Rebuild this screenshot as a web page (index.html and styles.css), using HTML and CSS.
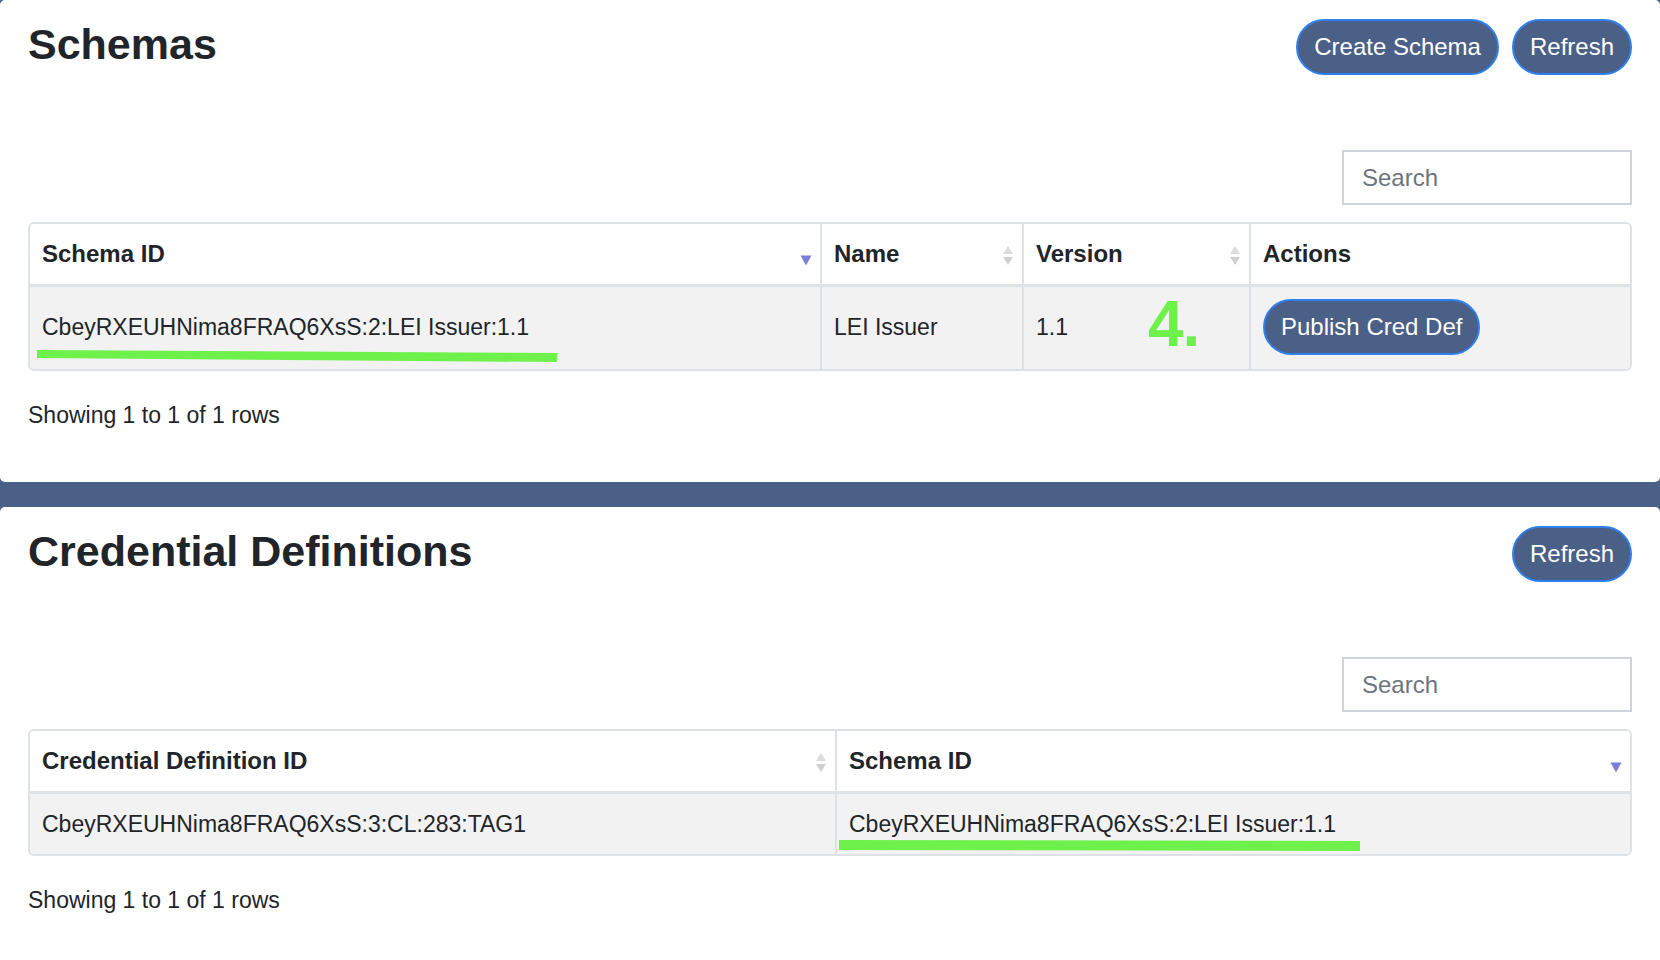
FILE: index.html
```html
<!DOCTYPE html>
<html lang="en">
<head>
<meta charset="utf-8">
<title>Schemas</title>
<link rel="stylesheet" href="styles.css">
</head>
<body>
  <section class="card">
    <div class="head">
      <h3 class="title">Schemas</h3>
      <div class="btns">
        <button class="btn">Create Schema</button>
        <button class="btn">Refresh</button>
      </div>
    </div>
    <div class="toolbar"><input class="search" type="text" placeholder="Search"></div>
    <div class="table-wrap">
      <table class="grid">
        <colgroup><col class="c-schema"><col class="c-name"><col class="c-version"><col></colgroup>
        <thead>
          <tr>
            <th><div class="th"><span>Schema ID</span><svg class="sort" viewBox="0 0 12 21"><polygon points="0.5,10.5 11.5,10.5 6,20.5" fill="#7b7fda"/></svg></div></th>
            <th><div class="th"><span>Name</span><svg class="sort" viewBox="0 0 12 21"><polygon points="6,1 11,9 1,9" fill="#dcdcdc"/><polygon points="1,12 11,12 6,20" fill="#d0d0d0"/></svg></div></th>
            <th><div class="th"><span>Version</span><svg class="sort" viewBox="0 0 12 21"><polygon points="6,1 11,9 1,9" fill="#dcdcdc"/><polygon points="1,12 11,12 6,20" fill="#d0d0d0"/></svg></div></th>
            <th><div class="th"><span>Actions</span></div></th>
          </tr>
        </thead>
        <tbody>
          <tr class="tall">
            <td class="mark">CbeyRXEUHNima8FRAQ6XsS:2:LEI Issuer:1.1<svg class="hl hl1" viewBox="0 0 520 12" preserveAspectRatio="none"><polygon points="0,0 520,3 520,12 0,8" fill="#6ff14b"/></svg></td>
            <td>LEI Issuer</td>
            <td class="mark">1.1<span class="step">4.</span></td>
            <td><button class="btn">Publish Cred Def</button></td>
          </tr>
        </tbody>
      </table>
    </div>
    <div class="pager">Showing 1 to 1 of 1 rows</div>
  </section>

  <section class="card">
    <div class="head">
      <h3 class="title">Credential Definitions</h3>
      <div class="btns">
        <button class="btn">Refresh</button>
      </div>
    </div>
    <div class="toolbar"><input class="search" type="text" placeholder="Search"></div>
    <div class="table-wrap">
      <table class="grid">
        <colgroup><col class="c-cred"><col></colgroup>
        <thead>
          <tr>
            <th><div class="th"><span>Credential Definition ID</span><svg class="sort" viewBox="0 0 12 21"><polygon points="6,1 11,9 1,9" fill="#dcdcdc"/><polygon points="1,12 11,12 6,20" fill="#d0d0d0"/></svg></div></th>
            <th><div class="th"><span>Schema ID</span><svg class="sort" viewBox="0 0 12 21"><polygon points="0.5,10.5 11.5,10.5 6,20.5" fill="#7b7fda"/></svg></div></th>
          </tr>
        </thead>
        <tbody>
          <tr>
            <td>CbeyRXEUHNima8FRAQ6XsS:3:CL:283:TAG1</td>
            <td class="mark">CbeyRXEUHNima8FRAQ6XsS:2:LEI Issuer:1.1<svg class="hl hl2" viewBox="0 0 520 12" preserveAspectRatio="none"><polygon points="0,0 520,1 520,11 0,10" fill="#6ff14b"/></svg></td>
          </tr>
        </tbody>
      </table>
    </div>
    <div class="pager">Showing 1 to 1 of 1 rows</div>
  </section>
</body>
</html>
```

FILE: styles.css
```css
html, body {
  margin: 0;
  padding: 0;
}

body {
  background: #4b6086;
  font-family: "Liberation Sans", Arial, Helvetica, sans-serif;
  font-size: 24px;
  line-height: 1.5;
  color: #212529;
}

.card {
  background: #fff;
  border-radius: 5px;
  padding: 19px 28px 49px;
}

.card + .card {
  margin-top: 25px;
}

.head {
  display: flex;
  justify-content: space-between;
  align-items: flex-start;
}

.title {
  margin: 0;
  font-size: 43px;
  line-height: 50px;
  font-weight: 700;
  padding-top: 0;
}

.btns {
  display: flex;
  gap: 13px;
}

.btn {
  font-family: inherit;
  font-size: 24px;
  line-height: 36px;
  padding: 8px 16px;
  border: 2px solid #2f7fee;
  border-radius: 30px;
  background: #4b6086;
  color: #fff;
  cursor: pointer;
}

.toolbar {
  display: flex;
  justify-content: flex-end;
  margin-top: 75px;
}

.search {
  width: 290px;
  height: 55px;
  box-sizing: border-box;
  border: 2px solid #ced4da;
  border-radius: 0;
  padding: 0 18px;
  font-family: inherit;
  font-size: 24px;
  color: #495057;
  outline: none;
}

.search::placeholder {
  color: #6c757d;
}

.table-wrap {
  margin-top: 17px;
  border: 2px solid #dee2e6;
  border-radius: 6px;
  overflow: hidden;
}

.grid {
  width: 100%;
  border-collapse: separate;
  border-spacing: 0;
  table-layout: fixed;
}

.c-schema { width: 790px; }
.c-name { width: 202px; }
.c-version { width: 227px; }
.c-cred { width: 805px; }

.grid th,
.grid td {
  padding: 12px 12px;
  text-align: left;
  vertical-align: middle;
  border-left: 2px solid #dee2e6;
  white-space: nowrap;
  line-height: 36px;
}

.grid td {
  font-size: 23px;
}

.grid th:first-child,
.grid td:first-child {
  border-left: none;
}

.grid th {
  background: #fff;
  font-weight: 700;
  border-bottom: 3px solid #dee2e6;
  padding-right: 8px;
}

.grid tbody tr {
  background: #f2f2f2;
}

.grid tbody tr.tall td {
  padding-top: 12px;
  padding-bottom: 14px;
}

.grid td .btn {
  font-size: 24px;
}

.th {
  display: flex;
  justify-content: space-between;
  align-items: center;
}

.sort {
  width: 12px;
  height: 21px;
  flex: none;
  margin-top: 2px;
}

.mark {
  position: relative;
}

.hl {
  position: absolute;
  height: 12px;
}

.hl1 {
  left: 7px;
  bottom: 7px;
  width: 520px;
}

.hl2 {
  left: 2px;
  bottom: 2px;
  width: 521px;
}

.step {
  position: absolute;
  left: 124px;
  top: 5px;
  font-size: 64px;
  line-height: 64px;
  font-weight: 700;
  color: #6ff14b;
  letter-spacing: -1px;
}

.pager {
  margin-top: 26px;
  font-size: 23px;
  line-height: 36px;
}
```
